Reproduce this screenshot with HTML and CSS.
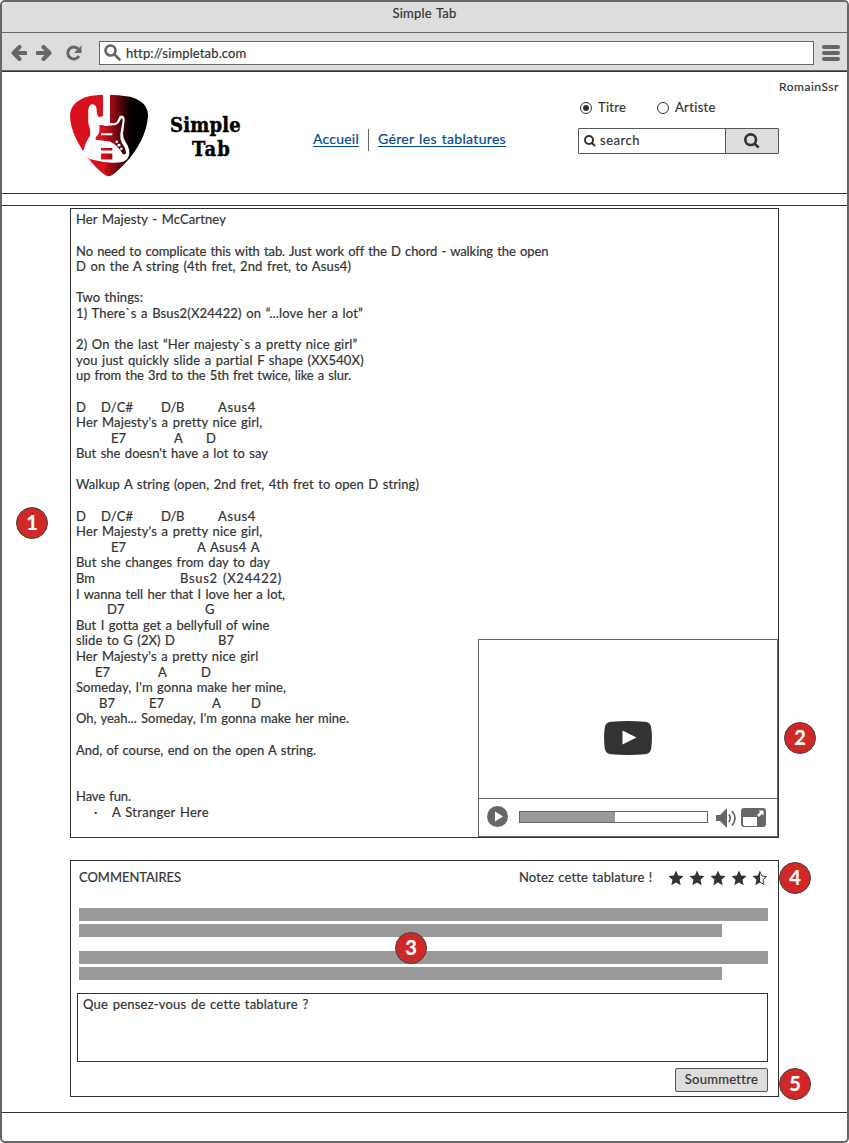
FILE: index.html
```html
<!DOCTYPE html>
<html lang="fr">
<head>
<meta charset="utf-8">
<title>Simple Tab</title>
<link rel="stylesheet" href="styles.css">
</head>
<body>
<div class="window">
  <div class="titlebar"><span data-w="64">Simple Tab</span></div>
  <div class="toolbar">
    <svg class="arrow" width="16" height="16" viewBox="0 0 16 16"><path d="M8.500 2 2.500 8l6 6M3 8h11.500" /></svg>
    <svg class="arrow" width="16" height="16" viewBox="0 0 16 16"><path d="M7.500 2l6 6-6 6M13 8H1.500" /></svg>
    <svg class="reload" width="18" height="16" viewBox="0 0 18 16"><path class="ring" d="M13.300 4A6 6 0 1 0 14 11" /><path class="tip" d="M16.500.5V8H9z" /></svg>
    <div class="url">
      <svg width="18" height="18" viewBox="0 0 18 18"><circle cx="6.500" cy="6.500" r="5" /><path d="M10.500 10.500 15.500 15.500" /></svg>
      <span data-w="120">http://simpletab.com</span>
    </div>
    <div class="menu"><i></i><i></i><i></i></div>
  </div>

  <header class="section header">
    <svg class="pick" width="78" height="83" viewBox="30 40 234 250" preserveAspectRatio="none">
      <defs><linearGradient id="red" gradientUnits="userSpaceOnUse" x1="30" y1="0" x2="264" y2="0">
        <stop offset="0" stop-color="#d9111f"/><stop offset=".42" stop-color="#d9111f"/><stop offset=".56" stop-color="#8c0a14"/><stop offset=".78" stop-color="#000"/>
      </linearGradient></defs>
      <path fill="url(#red)" d="M90 46Q147 38 210 48Q262 62 264 103C262 158 232 205 205 238Q160 288 147 288Q128 286 88 238C58 200 30 150 30 105Q32 60 90 46z"/>
      <path fill="#fff" d="M129 38H150V127L164 128Q171 126 175 115Q178 104 187 105Q195 108 194 119L189 160Q189 174 196 184Q209 202 208 220Q205 238 191 243Q171 250 131 245Q101 239 88 236L60 210L72 209Q73 195 80 183L90 165Q92 150 88 138Q83 126 85 112Q85 96 84 92Q86 72 97 71Q109 72 110 86Q110 104 117 110L129 106z"/>
      <path fill="url(#red)" d="M118 134L128 133Q132 137 142 136L164 134Q176 132 182 116Q187 110 188 120L181 160Q179 176 186 188Q198 204 198 218Q195 226 187 219Q174 195 150 183L107 178Q105 169 113 165Q121 153 118 134z"/>
      <path fill="url(#red)" d="M123 203h34v7h-34zM123 219h34v18h-34z"/>
      <path fill="#fff" d="M123 158h34v6h-34z"/>
      <g fill="#fff"><circle cx="170" cy="184" r="4"/><circle cx="177" cy="194" r="4.500"/><circle cx="184" cy="205" r="4"/></g>
    </svg>
    <div class="brand"><span data-w="71">Simple</span><span class="tab" data-w="39">Tab</span></div>
    <nav class="nav">
      <a data-w="46">Accueil</a><span class="divider"></span><a data-w="128">Gérer les tablatures</a>
    </nav>
    <div class="account">
      <span class="user" data-w="60">RomainSsr</span>
      <div class="radios">
        <span class="radio on"></span><span class="label first" data-w="28">Titre</span>
        <span class="radio"></span><span class="label" data-w="41">Artiste</span>
      </div>
      <div class="search">
        <div class="query"><svg width="12" height="12" viewBox="0 0 12 12"><circle cx="5" cy="5" r="4"/><path d="M7.500 7.500 11 11"/></svg><span data-w="40">search</span></div>
        <div class="go"><svg width="16" height="16" viewBox="0 0 12 12"><circle cx="5" cy="5" r="4"/><path d="M7.500 7.500 11 11"/></svg></div>
      </div>
    </div>
  </header>

  <main class="section main">
    <div class="sheet">
      <div class="lyrics">
        <p><span data-w="150">Her Majesty - McCartney</span></p>
        <p></p>
        <p><span data-w="472">No need to complicate this with tab. Just work off the D chord - walking the open</span></p>
        <p><span data-w="275">D on the A string (4th fret, 2nd fret, to Asus4)</span></p>
        <p></p>
        <p><span data-w="67">Two things:</span></p>
        <p><span data-w="287">1) There`s a Bsus2(X24422) on “...love her a lot”</span></p>
        <p></p>
        <p><span data-w="281">2) On the last “Her majesty`s a pretty nice girl”</span></p>
        <p><span data-w="288">you just quickly slide a partial F shape (XX540X)</span></p>
        <p><span data-w="275">up from the 3rd to the 5th fret twice, like a slur.</span></p>
        <p></p>
        <p><i style="width:25px">D</i><i style="width:60px"><span data-w="32">D/C#</span></i><i style="width:57px"><span data-w="23">D/B</span></i><span data-w="38">Asus4</span></p>
        <p><span data-w="186">Her Majesty's a pretty nice girl,</span></p>
        <p><i style="width:35px"></i><i style="width:63px">E7</i><i style="width:32px">A</i><i>D</i></p>
        <p><span data-w="192">But she doesn't have a lot to say</span></p>
        <p></p>
        <p><span data-w="343">Walkup A string (open, 2nd fret, 4th fret to open D string)</span></p>
        <p></p>
        <p><i style="width:25px">D</i><i style="width:60px"><span data-w="32">D/C#</span></i><i style="width:57px"><span data-w="23">D/B</span></i><span data-w="38">Asus4</span></p>
        <p><span data-w="186">Her Majesty's a pretty nice girl,</span></p>
        <p><i style="width:35px"></i><i style="width:86px">E7</i><span data-w="63">A Asus4 A</span></p>
        <p><span data-w="194">But she changes from day to day</span></p>
        <p><i style="width:104px">Bm</i><span data-w="102">Bsus2 (X24422)</span></p>
        <p><span data-w="209">I wanna tell her that I love her a lot,</span></p>
        <p><i style="width:31px"></i><i style="width:98px">D7</i><i>G</i></p>
        <p><span data-w="193">But I gotta get a bellyfull of wine</span></p>
        <p><i style="width:142px"><span data-w="99">slide to G (2X) D</span></i><i>B7</i></p>
        <p><span data-w="182">Her Majesty's a pretty nice girl</span></p>
        <p><i style="width:19px"></i><i style="width:63px">E7</i><i style="width:43px">A</i><i>D</i></p>
        <p><span data-w="210">Someday, I'm gonna make her mine,</span></p>
        <p><i style="width:23px"></i><i style="width:50px">B7</i><i style="width:63px">E7</i><i style="width:39px">A</i><i>D</i></p>
        <p><span data-w="273">Oh, yeah... Someday, I'm gonna make her mine.</span></p>
        <p></p>
        <p><span data-w="240">And, of course, end on the open A string.</span></p>
        <p></p>
        <p></p>
        <p><span data-w="55">Have fun.</span></p>
        <p><i style="width:18px"></i><i style="width:18px">·</i><span data-w="97">A Stranger Here</span></p>
      </div>
      <div class="player">
        <div class="screen">
          <svg width="48" height="34" viewBox="0 0 48 34"><path fill="#333" d="M7 .8Q24-.8 41 .8q5.500.5 6.200 5.700Q48.700 17 47.200 27.500 46.500 32.700 41 33.200q-17 1.600-34 0-5.500-.5-6.200-5.700Q-.700 17 .8 6.500 1.500 1.300 7 .8z"/><path fill="#fff" d="M18.500 9.500v14L32.500 16.500z"/></svg>
        </div>
        <div class="controls">
          <svg width="21" height="21" viewBox="0 0 21 21"><circle cx="10.500" cy="10.500" r="10.500" fill="#666"/><path fill="#fff" d="M8 5.500v10l8-5z"/></svg>
          <div class="progress"><div class="played"></div></div>
          <svg class="sound" width="21" height="20" viewBox="0 0 21 20"><path fill="#666" d="M0 7h4l7-7v20l-7-7H0z"/><path fill="none" stroke="#666" stroke-width="1.800" d="M12.800 6.500q3 3.500 0 7.500M16 3q6 7 0 14.500"/></svg>
          <svg class="full" width="25" height="19" viewBox="0 0 25 19"><rect width="25" height="19" rx="3" fill="#666"/><path fill="#fff" d="M2 9h14v9H4q-2 0-2-2zM17.500 2.500h5v5l-1.600-1.600-3 3-1.800-1.800 3-3z"/></svg>
        </div>
      </div>
    </div>

    <section class="comments">
      <div class="heading">
        <span data-w="102">COMMENTAIRES</span>
        <span class="rate" data-w="133">Notez cette tablature !</span>
        <div class="stars">
          <svg viewBox="0 0 16 16"><path d="M8 .5l2.200 5 5.300.6-4 3.600 1.200 5.600L8 12.500l-4.700 2.800 1.200-5.600-4-3.600 5.300-.6z"/></svg>
          <svg viewBox="0 0 16 16"><path d="M8 .5l2.200 5 5.300.6-4 3.600 1.200 5.600L8 12.500l-4.700 2.800 1.200-5.600-4-3.600 5.300-.6z"/></svg>
          <svg viewBox="0 0 16 16"><path d="M8 .5l2.200 5 5.300.6-4 3.600 1.200 5.600L8 12.500l-4.700 2.800 1.200-5.600-4-3.600 5.300-.6z"/></svg>
          <svg viewBox="0 0 16 16"><path d="M8 .5l2.200 5 5.300.6-4 3.600 1.200 5.600L8 12.500l-4.700 2.800 1.200-5.600-4-3.600 5.300-.6z"/></svg>
          <svg viewBox="0 0 16 16"><path d="M8 .5v12l-4.700 2.800 1.200-5.600-4-3.600 5.300-.6z"/><path class="empty" d="M8 1.500l1.800 4.500 4.700.6-3.600 3 1 4.800L8 12"/></svg>
        </div>
      </div>
      <div class="bars"><div class="bar"></div><div class="bar short"></div></div>
      <div class="bars"><div class="bar"></div><div class="bar short"></div></div>
      <div class="field"><span data-w="225">Que pensez-vous de cette tablature ?</span></div>
      <div class="submit"><span data-w="73">Soummettre</span></div>
    </section>
  </main>

  <b class="badge one">1</b>
  <b class="badge two">2</b>
  <b class="badge three">3</b>
  <b class="badge four">4</b>
  <b class="badge five">5</b>
</div>
<script src="fit.js"></script>
</body>
</html>
```
FILE: styles.css
```css
* { box-sizing: border-box; }
body { margin: 0; background: #fff; color: #333; font: 13px/15.6px Lato, "Open Sans", sans-serif; -webkit-text-stroke: .2px currentColor; }
svg { display: block; flex: none; }
p { margin: 0; }
i { font-style: normal; }
[data-w] { display: inline-block; white-space: pre; word-spacing: 1px; }

.window { position: relative; width: 849px; height: 1143px; border: 2px solid #666; border-radius: 5px; overflow: hidden; }
.titlebar { height: 31px; padding-top: 4px; background: #ddd; border-bottom: 1px solid #666; text-align: center; }
.toolbar { display: flex; align-items: center; height: 38px; padding: 2px 7px 0 9px; background: #ddd; border-bottom: 1px solid #666; }
.arrow { margin-right: 9px; fill: none; stroke: #666; stroke-width: 4; stroke-linecap: round; stroke-linejoin: round; }
.reload { margin-left: 4px; margin-right: 16px; }
.reload .ring { fill: none; stroke: #666; stroke-width: 3; }
.reload .tip { fill: #666; }
.url { display: flex; align-items: center; gap: 4px; width: 715px; height: 24px; padding-left: 4px; background: #fff; border: 1px solid #666; }
.url svg { margin-top: 1px; fill: none; stroke: #666; stroke-width: 2.6; stroke-linecap: round; }
.url span { margin-top: 2px; }
.menu { display: grid; gap: 2px; margin-left: 8px; }
.menu i { width: 18px; height: 4px; border-radius: 2px; background: #666; }

.section { margin: 0 -1px; border: 1px solid #333; }
.header { display: flex; align-items: flex-start; height: 123px; }
.pick { margin: 22px 0 0 68px; }
.brand { display: flex; flex-direction: column; width: 72px; margin: 41px 0 0 22px; color: #000; font: bold 20px/24px "DejaVu Serif Condensed", "DejaVu Serif", serif; -webkit-text-stroke: .4px #000; }
.brand .tab { margin-left: 22px; }
.nav { display: flex; flex: none; width: 193px; margin: 57px 0 0 71px; color: #004a8f; font-size: 14px; }
.nav a { height: 18px; padding-top: 2px; border-bottom: 1px solid #004a8f; }
.divider { width: 1px; height: 22px; margin: 0 9px; background: #666; }
.account { flex: none; width: 262px; margin-left: 72px; }
.user { margin: 7px 0 0 201px; font-size: 12px; }
.radios { display: flex; align-items: center; height: 16px; margin: 5px 0 0 2px; }
.radio { display: grid; place-items: center; width: 12px; height: 12px; border: 1px solid #333; border-radius: 50%; }
.radio.on::after { content: ""; width: 6px; height: 6px; border-radius: 50%; background: #333; }
.label { margin-left: 6px; }
.label.first { margin-right: 31px; }
.search { display: flex; width: 201px; height: 26px; margin-top: 12px; border: 1px solid #555; border-radius: 1px; }
.search svg { fill: none; stroke: #333; stroke-width: 2; }
.query { display: flex; align-items: center; gap: 4px; width: 146px; padding-left: 5px; }
.go { display: grid; place-items: center; flex: 1; background: #ddd; border-left: 1px solid #555; }

.main { height: 908px; margin-top: 11px; padding: 2px 0 0 68px; }
.sheet { display: flex; width: 709px; height: 630px; border: 1px solid #333; }
.lyrics { width: 407px; padding: 3.4px 0 0 5px; }
.lyrics p { display: flex; height: 15.6px; white-space: pre; }
.player { align-self: flex-end; display: flex; flex-direction: column; width: 300px; height: 198px; border: 1px solid #666; flex: none; }
.screen { display: flex; justify-content: center; height: 159px; padding-top: 81px; border-bottom: 1px solid #666; }
.controls { display: flex; align-items: center; flex: 1; padding: 0 0 2px 8px; }
.progress { width: 189px; height: 12px; margin: 0 8px 0 11px; border: 1px solid #666; }
.played { width: 95px; height: 100%; background: #999; }
.sound { margin-top: 2px; margin-right: 4px; }
.full { margin-top: 2px; }

.comments { width: 709px; height: 237px; margin-top: 22px; padding: 8px 10px 0 6px; border: 1px solid #333; }
.heading { display: flex; align-items: center; height: 17px; margin-bottom: 22px; padding-left: 2px; }
.rate { margin-left: 338px; }
.stars { display: flex; gap: 5px; margin-left: 16px; }
.stars svg { width: 16px; height: 16px; fill: #333; }
.stars .empty { fill: none; stroke: #333; stroke-width: 1; }
.bars { display: grid; gap: 3px; margin: 0 0 14px 2px; }
.bars + .bars { margin-bottom: 13px; }
.bar { height: 13px; background: #999; }
.bar.short { width: 643px; }
.field { height: 69px; padding: 3px 5px; border: 1px solid #333; }
.submit { width: 93px; height: 24px; margin: 6px 0 0 auto; padding-top: 3px; background: #ddd; border: 1px solid #555; border-radius: 2px; text-align: center; }

.badge { position: absolute; width: 32px; height: 32px; border: 1px solid #444; border-radius: 50%; background: #cf2827; color: #fff; font-size: 20px; line-height: 29px; text-align: center; }
.one { left: 14px; top: 505px; }
.two { left: 782px; top: 720px; }
.three { left: 393px; top: 930px; }
.four { left: 777px; top: 860px; }
.five { left: 777px; top: 1066px; }
```
FILE: fit.js
```js
// Tracks each label to the width given in its data-w attribute.
document.querySelectorAll('[data-w]').forEach(function (el) {
  var range = document.createRange();
  range.selectNodeContents(el);
  var natural = range.getBoundingClientRect().width;
  var gap = (Number(el.dataset.w) - natural) / el.textContent.length;
  el.style.letterSpacing = gap + 'px';
});
```
